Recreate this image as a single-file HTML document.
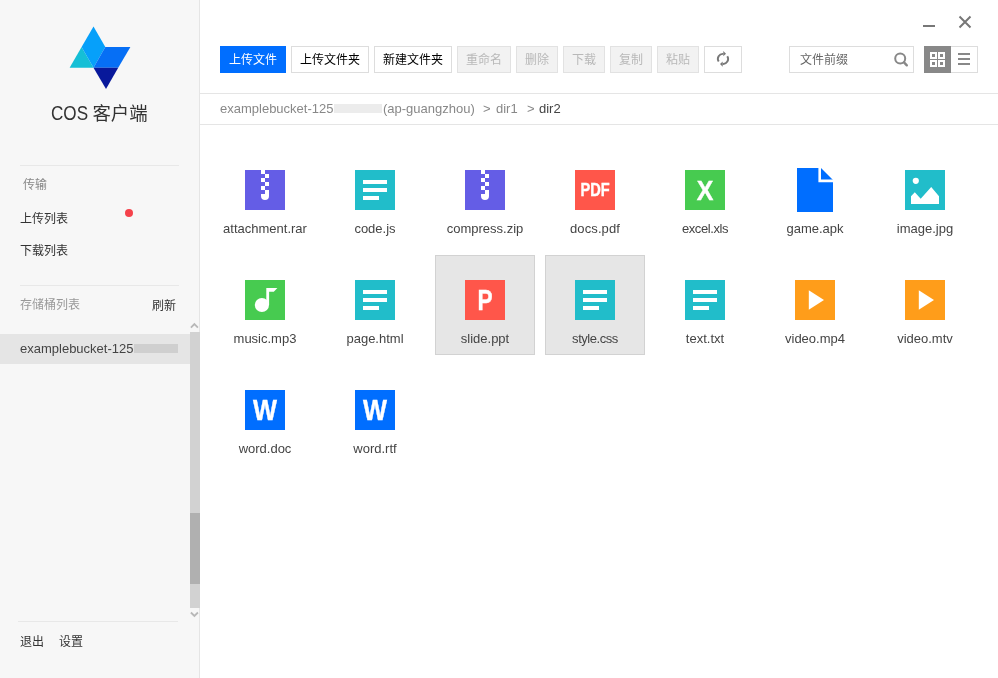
<!DOCTYPE html>
<html lang="zh-CN">
<head>
<meta charset="utf-8">
<title>COS 客户端</title>
<style>
*{box-sizing:border-box;margin:0;padding:0}
html,body{width:998px;height:678px;overflow:hidden;background:#fff}
body{will-change:transform;font-family:"Liberation Sans","Noto Sans CJK SC",sans-serif;font-size:12px;color:#333;position:relative}
.abs{position:absolute}
#side{position:absolute;left:0;top:0;width:200px;height:678px;background:#f7f7f7;border-right:1px solid #e5e5e5}
#side .hr{position:absolute;left:20px;width:159px;height:1px;background:#e8e8e8}
.t{position:absolute;white-space:nowrap;line-height:16px}
#title{left:51px;top:101px;font-size:18.4px;line-height:24px;color:#333}
#cos{display:inline-block;font-size:20px;line-height:24px;transform:scaleX(.855);transform-origin:0 50%;margin-right:-7px;vertical-align:baseline}
.btn{position:absolute;top:46px;height:27px;line-height:27px;text-align:center;font-size:12px;border:1px solid #ddd;background:#fff;color:#000;white-space:nowrap}
.btn.pri{background:#006eff;border-color:#006eff;color:#fff}
.btn.dis{background:#f2f2f2;border-color:#e2e2e2;color:#b8b8b8}
.tile{position:absolute;width:100px;height:100px;border:1px solid transparent}
.tile.sel{background:#e6e6e6;border-color:#d2d2d2}
.tile svg{position:absolute;left:29px;top:24px}
.tile .lb{position:absolute;left:-11px;width:120px;top:75px;text-align:center;font-size:13px;line-height:16px;color:#444;white-space:nowrap}
</style>
</head>
<body>
<div id="side">
  <svg class="abs" style="left:60px;top:20px" width="80" height="80" viewBox="60 20 80 80">
    <polygon points="69.6,67.8 81.6,47 93.5,67.8" fill="#15bfd6"/>
    <polygon points="93.5,26.5 105.3,47 93.5,67.8 81.6,47" fill="#06a0fa"/>
    <polygon points="105.3,47 130.4,47 118.2,67.8 93.5,67.8" fill="#066ff5"/>
    <polygon points="93.5,67.8 118.2,67.8 106,89" fill="#08189b"/>
  </svg>
  <div class="t" id="title"><span id="cos">COS</span> 客户端</div>
  <div class="hr" style="top:165px"></div>
  <div class="t" style="left:23px;top:177px;color:#888">传输</div>
  <div class="t" style="left:20px;top:211px;color:#333">上传列表</div>
  <div class="abs" style="left:125px;top:209px;width:8px;height:8px;border-radius:50%;background:#f5424b"></div>
  <div class="t" style="left:20px;top:243px;color:#333">下载列表</div>
  <div class="hr" style="top:285px"></div>
  <div class="t" style="left:20px;top:297px;color:#999">存储桶列表</div>
  <div class="t" style="left:152px;top:298px;color:#333">刷新</div>
  <div class="abs" style="left:0;top:334px;width:190px;height:30px;background:#e5e5e5"></div>
  <div class="t" style="left:20px;top:341px;font-size:13px;color:#444">examplebucket-125</div>
  <div class="abs" style="left:134px;top:344px;width:44px;height:9px;background:#cfcfcf"></div>
  <!-- scrollbar -->
  <div class="abs" style="left:190px;top:332px;width:10px;height:276px;background:#d2d2d2"></div>
  <div class="abs" style="left:190px;top:513px;width:10px;height:71px;background:#b0b0b0"></div>
  <svg class="abs" style="left:190px;top:320px" width="10" height="12" viewBox="0 0 10 12"><path d="M0.9 7.6 L4.4 4.1 L7.9 7.6" fill="none" stroke="#b8b8b8" stroke-width="1.8"/></svg>
  <svg class="abs" style="left:190px;top:608px" width="10" height="12" viewBox="0 0 10 12"><path d="M0.9 4.5 L4.4 8 L7.9 4.5" fill="none" stroke="#b8b8b8" stroke-width="1.8"/></svg>
  <div class="hr" style="top:621px;left:18px;width:160px"></div>
  <div class="t" style="left:20px;top:634px;color:#333">退出</div>
  <div class="t" style="left:59px;top:634px;color:#333">设置</div>
</div>

<div id="main">
  <!-- window controls -->
  <div class="abs" style="left:923px;top:25px;width:12px;height:2px;background:#777"></div>
  <svg class="abs" style="left:958px;top:15px" width="14" height="14" viewBox="0 0 14 14"><path d="M1.5 1.5 L12.5 12.5 M12.5 1.5 L1.5 12.5" stroke="#777" stroke-width="2" fill="none"/></svg>

  <div class="btn pri" style="left:220px;width:66px">上传文件</div>
  <div class="btn" style="left:291px;width:78px">上传文件夹</div>
  <div class="btn" style="left:374px;width:78px">新建文件夹</div>
  <div class="btn dis" style="left:457px;width:54px">重命名</div>
  <div class="btn dis" style="left:516px;width:42px">删除</div>
  <div class="btn dis" style="left:563px;width:42px">下载</div>
  <div class="btn dis" style="left:610px;width:42px">复制</div>
  <div class="btn dis" style="left:657px;width:42px">粘贴</div>
  <div class="btn" style="left:704px;width:38px"></div>
  <svg class="abs" style="left:715px;top:51px" width="16" height="16" viewBox="0 0 16 16">
    <path d="M3.7 10.6 A5 5 0 0 1 8.4 2.9" fill="none" stroke="#777" stroke-width="1.9"/>
    <polygon points="8.3,0.1 11,2.8 8.3,5.3" fill="#777"/>
    <path d="M12.3 5.2 A5 5 0 0 1 7.6 12.9" fill="none" stroke="#777" stroke-width="1.9"/>
    <polygon points="7.7,15.7 5,13 7.7,10.5" fill="#777"/>
  </svg>

  <div class="abs" style="left:789px;top:46px;width:125px;height:27px;border:1px solid #ddd;background:#fff"></div>
  <div class="t" style="left:800px;top:52px;color:#666">文件前缀</div>
  <div class="abs" style="left:924px;top:46px;width:54px;height:27px;border:1px solid #ddd;background:#fff"></div>
  <div class="abs" style="left:924px;top:46px;width:27px;height:27px;background:#888"></div>
  <svg class="abs" style="left:892px;top:50px" width="18" height="18" viewBox="892 50 18 18">
    <circle cx="900.2" cy="58.6" r="5" fill="none" stroke="#888" stroke-width="2"/>
    <path d="M904 62.4 L906.8 65.3" stroke="#888" stroke-width="2.4" stroke-linecap="round"/>
  </svg>
  <svg class="abs" style="left:930px;top:52px" width="15" height="15" viewBox="0 0 15 15">
    <rect x="0" y="0" width="7" height="7" fill="#fff"/><rect x="8" y="0" width="7" height="7" fill="#fff"/>
    <rect x="0" y="8" width="7" height="7" fill="#fff"/><rect x="8" y="8" width="7" height="7" fill="#fff"/>
    <rect x="2" y="2" width="3" height="3" fill="#888"/><rect x="10" y="2" width="3" height="3" fill="#888"/>
    <rect x="2" y="10" width="3" height="3" fill="#888"/><rect x="10" y="10" width="3" height="3" fill="#888"/>
  </svg>
  <div class="abs" style="left:958px;top:53px;width:12px;height:2px;background:#888"></div>
  <div class="abs" style="left:958px;top:58px;width:12px;height:2px;background:#888"></div>
  <div class="abs" style="left:958px;top:63px;width:12px;height:2px;background:#888"></div>

  <div class="abs" style="left:200px;top:93px;width:798px;height:1px;background:#e5e5e5"></div>
  <div class="abs" style="left:200px;top:124px;width:798px;height:1px;background:#e5e5e5"></div>
  <div class="t" style="left:220px;top:101px;font-size:13px;color:#888">examplebucket-125</div>
  <div class="abs" style="left:334px;top:104px;width:48px;height:9px;background:#ececec"></div>
  <div class="t" style="left:383px;top:101px;font-size:13px;color:#888">(ap-guangzhou)</div>
  <div class="t" style="left:483px;top:101px;font-size:13px;color:#888">&gt;</div>
  <div class="t" style="left:496px;top:101px;font-size:13px;color:#888">dir1</div>
  <div class="t" style="left:527px;top:101px;font-size:13px;color:#888">&gt;</div>
  <div class="t" style="left:539px;top:101px;font-size:13px;color:#444">dir2</div>

  <div id="grid">
<div class="tile" style="left:215px;top:145px"><svg width="40" height="40" viewBox="0 0 40 40"><rect width="40" height="40" fill="#645de6"/><rect x="16" y="0" width="4" height="4" fill="#fff"/><rect x="20" y="4" width="4" height="4" fill="#fff"/><rect x="16" y="8" width="4" height="4" fill="#fff"/><rect x="20" y="12" width="4" height="4" fill="#fff"/><rect x="16" y="16" width="4" height="4" fill="#fff"/><rect x="20" y="20" width="4" height="4" fill="#fff"/><path d="M16 24 H20 V20 H24 V26 A4 4 0 0 1 16 26 Z" fill="#fff"/></svg><div class="lb">attachment.rar</div></div>
<div class="tile" style="left:325px;top:145px"><svg width="40" height="40" viewBox="0 0 40 40"><rect width="40" height="40" fill="#21bdca"/><rect x="8" y="10" width="24" height="4" fill="#fff"/><rect x="8" y="18" width="24" height="4" fill="#fff"/><rect x="8" y="26" width="16" height="4" fill="#fff"/></svg><div class="lb">code.js</div></div>
<div class="tile" style="left:435px;top:145px"><svg width="40" height="40" viewBox="0 0 40 40"><rect width="40" height="40" fill="#645de6"/><rect x="16" y="0" width="4" height="4" fill="#fff"/><rect x="20" y="4" width="4" height="4" fill="#fff"/><rect x="16" y="8" width="4" height="4" fill="#fff"/><rect x="20" y="12" width="4" height="4" fill="#fff"/><rect x="16" y="16" width="4" height="4" fill="#fff"/><rect x="20" y="20" width="4" height="4" fill="#fff"/><path d="M16 24 H20 V20 H24 V26 A4 4 0 0 1 16 26 Z" fill="#fff"/></svg><div class="lb">compress.zip</div></div>
<div class="tile" style="left:545px;top:145px"><svg width="40" height="40" viewBox="0 0 40 40"><rect width="40" height="40" fill="#ff564a"/><text transform="translate(20,26.1) scale(0.81,1)" x="0" y="0" text-anchor="middle" font-family="Liberation Sans, sans-serif" font-weight="bold" font-size="18" fill="#fff" stroke="#fff" stroke-width="0.4">PDF</text></svg><div class="lb" style="letter-spacing:0.1px">docs.pdf</div></div>
<div class="tile" style="left:655px;top:145px"><svg width="40" height="40" viewBox="0 0 40 40"><rect width="40" height="40" fill="#47cb50"/><text transform="translate(20,30) scale(0.875,1)" x="0" y="0" text-anchor="middle" font-family="Liberation Sans, sans-serif" font-weight="bold" font-size="28.5" fill="#fff" stroke="#fff" stroke-width="0.4">X</text></svg><div class="lb" style="letter-spacing:-0.4px">excel.xls</div></div>
<div class="tile" style="left:765px;top:145px"><svg width="40" height="44" viewBox="0 0 40 44" style="top:22px"><path d="M2 0 H26 L38 12 V44 H2 Z" fill="#006eff"/><path d="M23.4 0 H26 V11.6 H38 V14.2 H23.4 Z" fill="#fff"/></svg><div class="lb">game.apk</div></div>
<div class="tile" style="left:875px;top:145px"><svg width="40" height="40" viewBox="0 0 40 40"><rect width="40" height="40" fill="#21bdca"/><circle cx="10.8" cy="10.8" r="3.1" fill="#fff"/><polygon points="6,34 6,26.3 9.8,22.3 15.7,28.8 26.2,17 34,26.3 34,34" fill="#fff"/></svg><div class="lb">image.jpg</div></div>
<div class="tile" style="left:215px;top:255px"><svg width="40" height="40" viewBox="0 0 40 40"><rect width="40" height="40" fill="#47cb50"/><circle cx="16.9" cy="25" r="7.1" fill="#fff"/><polygon points="21.3,8.1 32.4,8.1 28.8,11.8 24.1,11.8 24.1,25 21.3,25" fill="#fff"/></svg><div class="lb">music.mp3</div></div>
<div class="tile" style="left:325px;top:255px"><svg width="40" height="40" viewBox="0 0 40 40"><rect width="40" height="40" fill="#21bdca"/><rect x="8" y="10" width="24" height="4" fill="#fff"/><rect x="8" y="18" width="24" height="4" fill="#fff"/><rect x="8" y="26" width="16" height="4" fill="#fff"/></svg><div class="lb">page.html</div></div>
<div class="tile sel" style="left:435px;top:255px"><svg width="40" height="40" viewBox="0 0 40 40"><rect width="40" height="40" fill="#ff564a"/><text transform="translate(20,30.2) scale(0.78,1)" x="0" y="0" text-anchor="middle" font-family="Liberation Sans, sans-serif" font-weight="bold" font-size="29" fill="#fff" stroke="#fff" stroke-width="0.4">P</text></svg><div class="lb">slide.ppt</div></div>
<div class="tile sel" style="left:545px;top:255px"><svg width="40" height="40" viewBox="0 0 40 40"><rect width="40" height="40" fill="#21bdca"/><rect x="8" y="10" width="24" height="4" fill="#fff"/><rect x="8" y="18" width="24" height="4" fill="#fff"/><rect x="8" y="26" width="16" height="4" fill="#fff"/></svg><div class="lb" style="letter-spacing:-0.45px">style.css</div></div>
<div class="tile" style="left:655px;top:255px"><svg width="40" height="40" viewBox="0 0 40 40"><rect width="40" height="40" fill="#21bdca"/><rect x="8" y="10" width="24" height="4" fill="#fff"/><rect x="8" y="18" width="24" height="4" fill="#fff"/><rect x="8" y="26" width="16" height="4" fill="#fff"/></svg><div class="lb">text.txt</div></div>
<div class="tile" style="left:765px;top:255px"><svg width="40" height="40" viewBox="0 0 40 40"><rect width="40" height="40" fill="#ff9d1a"/><polygon points="13.8,10.2 29,20 13.8,29.8" fill="#fff"/></svg><div class="lb">video.mp4</div></div>
<div class="tile" style="left:875px;top:255px"><svg width="40" height="40" viewBox="0 0 40 40"><rect width="40" height="40" fill="#ff9d1a"/><polygon points="13.8,10.2 29,20 13.8,29.8" fill="#fff"/></svg><div class="lb">video.mtv</div></div>
<div class="tile" style="left:215px;top:365px"><svg width="40" height="40" viewBox="0 0 40 40"><rect width="40" height="40" fill="#006eff"/><text transform="translate(20,30) scale(0.875,1)" x="0" y="0" text-anchor="middle" font-family="Liberation Sans, sans-serif" font-weight="bold" font-size="29" fill="#fff" stroke="#fff" stroke-width="0.4">W</text></svg><div class="lb">word.doc</div></div>
<div class="tile" style="left:325px;top:365px"><svg width="40" height="40" viewBox="0 0 40 40"><rect width="40" height="40" fill="#006eff"/><text transform="translate(20,30) scale(0.875,1)" x="0" y="0" text-anchor="middle" font-family="Liberation Sans, sans-serif" font-weight="bold" font-size="29" fill="#fff" stroke="#fff" stroke-width="0.4">W</text></svg><div class="lb">word.rtf</div></div>
</div>
</div>
</body>
</html>
